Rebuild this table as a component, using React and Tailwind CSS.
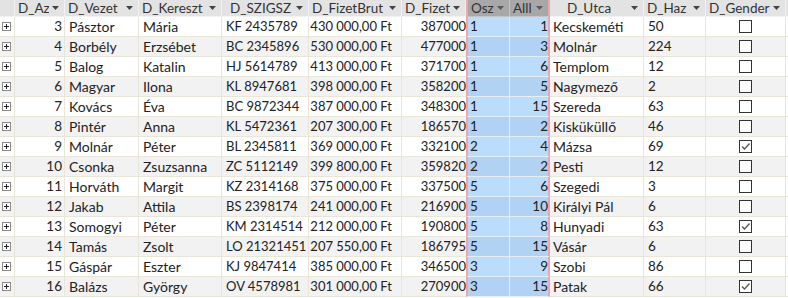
import React from 'react';

const rows = [
  [3, 'Pásztor', 'Mária', 'KF 2435789', '430 000,00 Ft', '387000', 1, 1, 'Kecskeméti', '50', false],
  [4, 'Borbély', 'Erzsébet', 'BC 2345896', '530 000,00 Ft', '477000', 1, 3, 'Molnár', '224', false],
  [5, 'Balog', 'Katalin', 'HJ 5614789', '413 000,00 Ft', '371700', 1, 6, 'Templom', '12', false],
  [6, 'Magyar', 'Ilona', 'KL 8947681', '398 000,00 Ft', '358200', 1, 5, 'Nagymező', '2', false],
  [7, 'Kovács', 'Éva', 'BC 9872344', '387 000,00 Ft', '348300', 1, 15, 'Szereda', '63', false],
  [8, 'Pintér', 'Anna', 'KL 5472361', '207 300,00 Ft', '186570', 1, 2, 'Kisküküllő', '46', false],
  [9, 'Molnár', 'Péter', 'BL 2345811', '369 000,00 Ft', '332100', 2, 4, 'Mázsa', '69', true],
  [10, 'Csonka', 'Zsuzsanna', 'ZC 5112149', '399 800,00 Ft', '359820', 2, 2, 'Pesti', '12', false],
  [11, 'Horváth', 'Margit', 'KZ 2314168', '375 000,00 Ft', '337500', 5, 6, 'Szegedi', '3', false],
  [12, 'Jakab', 'Attila', 'BS 2398174', '241 000,00 Ft', '216900', 5, 10, 'Királyi Pál', '6', false],
  [13, 'Somogyi', 'Péter', 'KM 2314514', '212 000,00 Ft', '190800', 5, 8, 'Hunyadi', '63', true],
  [14, 'Tamás', 'Zsolt', 'LO 21321451', '207 550,00 Ft', '186795', 5, 15, 'Vásár', '6', false],
  [15, 'Gáspár', 'Eszter', 'KJ 9847414', '385 000,00 Ft', '346500', 3, 9, 'Szobi', '86', false],
  [16, 'Balázs', 'György', 'OV 4578981', '301 000,00 Ft', '270900', 3, 15, 'Patak', '66', true],
];

const grid = 'grid grid-cols-[15px_50px_74px_83px_87px_93px_64px_44px_40px_94px_62px_80px_1fr]';

function Arrow({ light }) {
  return (
    <svg width="7" height="4" viewBox="0 0 7 4" className="shrink-0">
      <path d="M0 0 H7 L3.5 4 Z" fill={light ? '#5a5a5a' : '#444'} />
    </svg>
  );
}

function Head({ label, center, sel, pl = 'pl-[3px]', pink }) {
  return (
    <div
      className={`flex items-center h-[17px] overflow-hidden border-r border-b ${sel ? 'bg-[#a8a8a8] border-[#c4c4c4]' : 'bg-[#e3e3e3] border-[#f2f2f2]'} ${pink || ''}`}
    >
      <span className={`flex-1 min-w-0 overflow-hidden whitespace-nowrap leading-[16px] ${center ? 'text-center' : pl}`}>{label}</span>
      <span className="pr-[5px] pl-[3px]">
        <Arrow light={sel} />
      </span>
    </div>
  );
}

function Expander() {
  return (
    <svg width="9" height="9" viewBox="0 0 9 9">
      <rect x="0.5" y="0.5" width="8" height="8" fill="#fff" stroke="#8a8a8a" />
      <path d="M2 4.5 H7 M4.5 2 V7" stroke="#222" strokeWidth="1" />
    </svg>
  );
}

function Check({ on }) {
  return (
    <svg width="13" height="13" viewBox="0 0 13 13">
      <rect x="0.5" y="0.5" width="12" height="12" fill="#fff" stroke="#333" />
      {on && <path d="M3 6.5 L5.5 9 L10.5 3.5" fill="none" stroke="#555" strokeWidth="1.3" />}
    </svg>
  );
}

export default function App() {
  return (
    <div className="w-[788px] h-[298px] overflow-hidden bg-white text-[14px] leading-none text-[#222]" style={{ fontFamily: 'Lato, "Open Sans", sans-serif' }}>
      <div className={`${grid} text-[13.5px] text-[#333]`}>
        <div className="h-[17px] bg-[#e3e3e3] border-r border-b border-[#f2f2f2]" />
        <Head label="D_Az" />
        <Head label="D_Vezet" />
        <Head label="D_Kereszt" />
        <Head label="D_SZIGSZ" pl="pl-[8px]" />
        <Head label="D_FizetBrut" />
        <Head label="D_Fizet" />
        <Head label="Osz" sel pink="border-l-2 border-l-[#f0a4ac]" />
        <Head label="Alll" sel pink="border-r-2 border-r-[#f0a4ac]" />
        <Head label="D_Utca" center />
        <Head label="D_Haz" />
        <Head label="D_Gender" />
        <div className="h-[17px] bg-[#e3e3e3] border-b border-[#f2f2f2]" />
      </div>

      {rows.map((r, i) => {
        const alt = i % 2 === 1;
        const bg = alt ? 'bg-[#f2f2f2]' : 'bg-white';
        const blue = alt ? 'bg-[#b1d2f2]' : 'bg-[#bcdcfb]';
        const cell = `h-[20px] flex items-center overflow-hidden whitespace-nowrap border-r border-b border-[#e9e6d8] ${bg}`;
        return (
          <div key={r[0]} className={grid}>
            <div className={`${cell} pl-[2px]`}>
              <Expander />
            </div>
            <div className={`${cell} justify-end pr-[2px] text-[13.5px]`}>{r[0]}</div>
            <div className={`${cell} pl-[4px]`}>{r[1]}</div>
            <div className={`${cell} pl-[4px]`}>{r[2]}</div>
            <div className={`${cell} pl-[4px] text-[13px]`}>{r[3]}</div>
            <div className={`${cell} justify-end pr-[9px] text-[13px]`}>{r[4]}</div>
            <div className={`${cell} justify-end pr-0 border-r-0 text-[13px]`}>{r[5]}</div>
            <div className={`h-[20px] flex items-center pl-[2px] text-[13.5px] border-l-2 border-l-[#f0a4ac] border-r border-b border-[#e4eef8] ${blue}`}>{r[6]}</div>
            <div className={`h-[20px] flex items-center justify-end text-[13.5px] border-r-2 border-r-[#f0a4ac] border-b border-b-[#e4eef8] ${blue}`}>{r[7]}</div>
            <div className={`${cell} pl-[3px]`}>{r[8]}</div>
            <div className={`${cell} pl-[4px] text-[13.5px]`}>{r[9]}</div>
            <div className={`${cell} justify-center`}>
              <Check on={r[10]} />
            </div>
            <div className={`h-[20px] border-b border-[#e9e6d8] bg-white`} />
          </div>
        );
      })}
    </div>
  );
}
